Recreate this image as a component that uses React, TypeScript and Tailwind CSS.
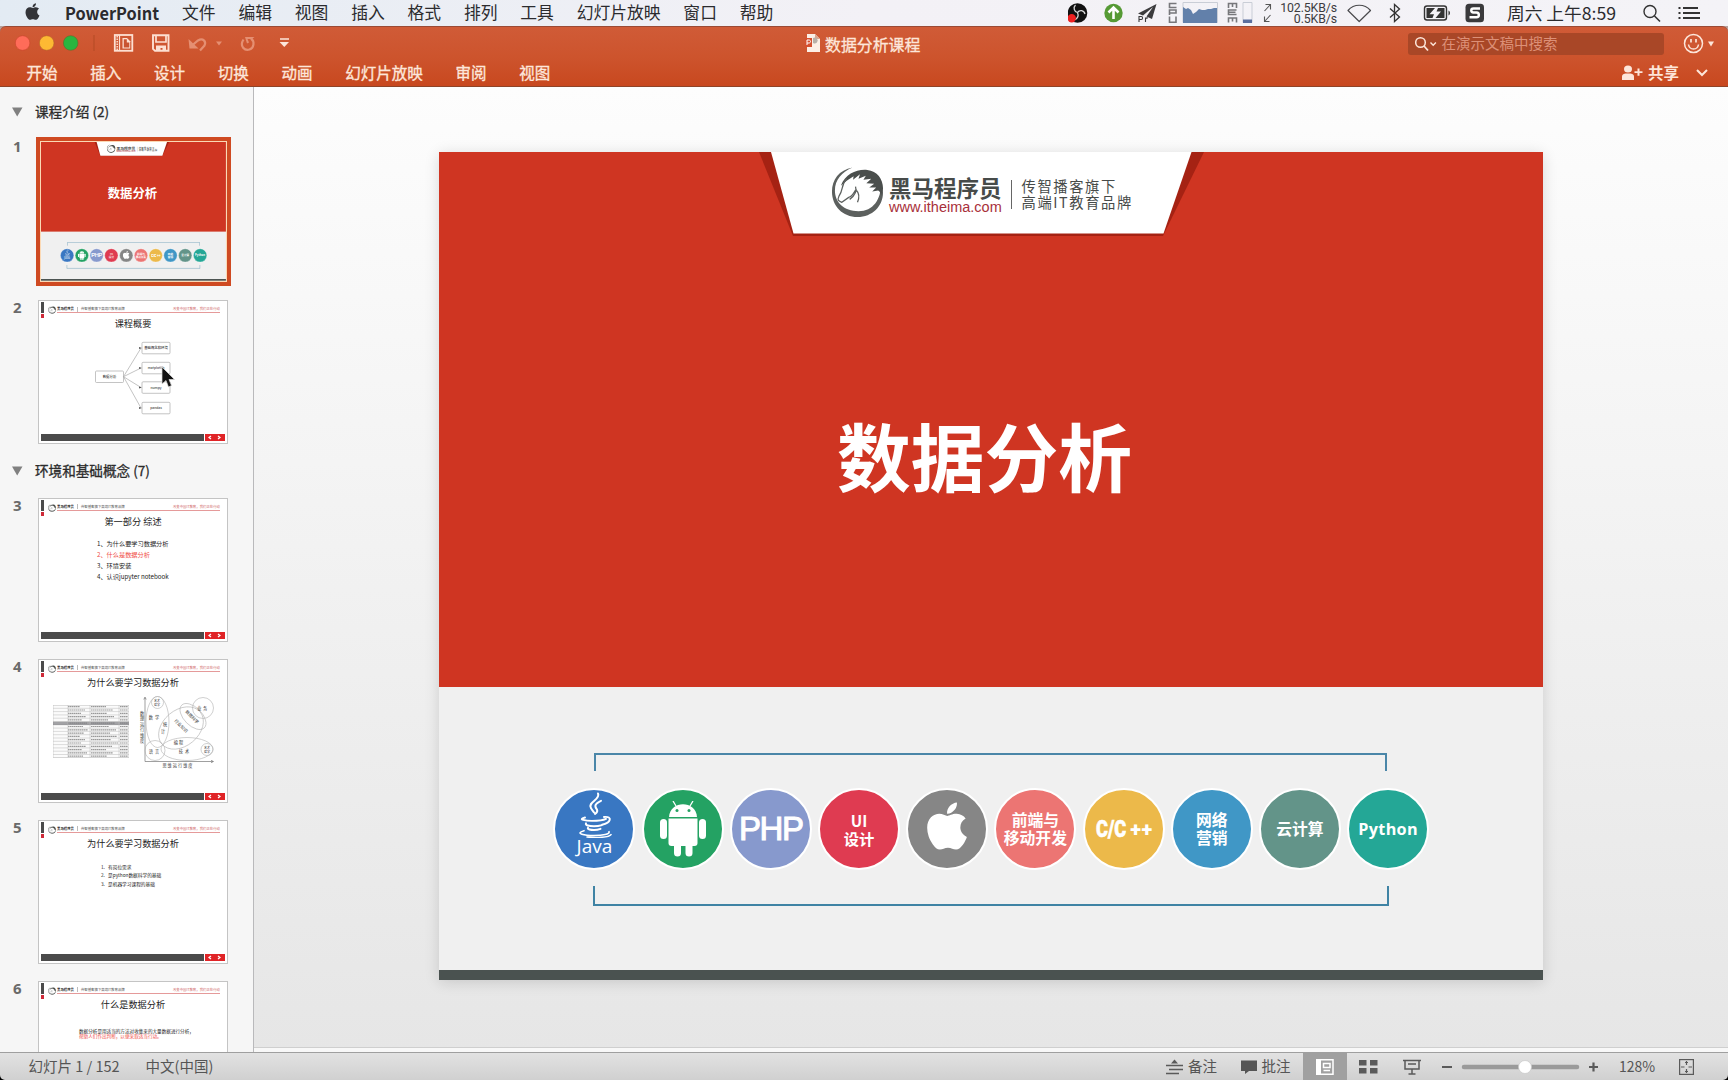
import React from "react";
import { FaApple } from "react-icons/fa";

const menus = ["文件", "编辑", "视图", "插入", "格式", "排列", "工具", "幻灯片放映", "窗口", "帮助"];
const tabs = ["开始", "插入", "设计", "切换", "动画", "幻灯片放映", "审阅", "视图"];

function MenuBar() {
  return (
    <div className="flex h-[26px] shrink-0 items-center bg-gradient-to-r from-[#e3ebf3] via-[#f3f1f6] to-[#f4f3f7] text-[17px] leading-none text-[#2b2b2e]">
      <div className="ml-6 flex w-[41px]">
        <FaApple className="-mt-[3px] h-[19px] w-[17px] text-[#333438]" />
      </div>
      <div className="-mt-[2px] w-[117px] text-[17px] font-bold">
        <span className="inline-block origin-left scale-x-[0.96]">PowerPoint</span>
      </div>
      <div className="-mt-px flex gap-[22.8px]">
        {menus.map((m) => (
          <span key={m} className="text-[16.8px] whitespace-nowrap">{m}</span>
        ))}
      </div>
      <div className="relative ml-auto h-[26px] w-[660px] shrink-0">
        <svg className="absolute inset-0" width="660" height="26" viewBox="1068 0 660 26" fill="none">
          <circle cx="1077.5" cy="13" r="9.8" fill="#111" />
          <g stroke="#d8d8d8" strokeWidth="1.3">
            <path d="M1077.5 12.5c-3.500-1-4.500-5-2-7.500M1077.500 12.500c2-3 6.500-2.500 7.500 1.500M1077.500 12.500c1.500 3.500 0 6-3 7.500" />
          </g>
          <circle cx="1071.700" cy="18.300" r="4.200" fill="#ee2020" />
          <circle cx="1113.500" cy="13" r="9.200" fill="#569a35" />
          <path d="M1113.500 19V8M1108.500 12.500l5-5 5 5" stroke="#fff" strokeWidth="2.600" />
          <path d="M1156.500 4l-18.500 9.500 5 2L1153 7l-6.500 9.500 5.500 2.500z" fill="#3b3b3d" />
          <path d="M1139 22v-5.500h2.300c1.700 0 1.700 3 0 3H1139M1145.500 22v-4.500M1145.500 19c.5-1 1.500-1.200 2.500-1" stroke="#3b3b3d" strokeWidth="1.100" />
          <g stroke="#77777b" strokeWidth="1.600">
            <path d="M1176.500 3.500h-7v4h7M1169.500 15v-5h6.500v3h-6.500M1169.500 16.500v5.700h6.500v-5.700" />
            <path d="M1228.500 8V3.500h8V8M1232.500 3.500V7M1236.500 10h-8v4.500h8M1228.500 12.200h7M1228.500 22.500V18h8v4.500M1232.500 18v3.500" />
          </g>
          <path d="M1183 2.500h34.500v20H1183z" stroke="#c9cdd6" />
          <path d="M1183 23V7l3 2 2-1 3 2 2 4 3-2 3-3 3 1h3l3-1h3l3-1h3V23z" fill="#6280aa" />
          <path d="M1243 2.500h9v20h-9z" stroke="#c9cdd6" />
          <path d="M1243 19.500h9V23h-9z" fill="#5b6f9e" />
          <path d="M1264.500 11l6-6.500M1265.500 4.500h5v5M1270.500 15l-6 6.500M1264.500 16.500v5h5" stroke="#555" strokeWidth="1.100" />
          <path d="M1348 10.500c6-7 16.500-7 22.500 0l-11.300 11z" stroke="#4a4a4d" strokeWidth="1.200" strokeLinejoin="round" />
          <path d="M1390 8.500l9.500 8.500-5 4.500v-17l5 4.500-9.500 8.500" stroke="#333" strokeWidth="1.300" />
          <rect x="1424.500" y="6" width="22" height="14" rx="2.500" stroke="#333" strokeWidth="1.400" />
          <path d="M1448.500 10.500c2 1 2 4 0 5z" fill="#333" />
          <path d="M1426.500 8h8.500l-5.500 6.300h4.500l-1.500 3.700h-6zM1438 8h6.500v10h-9l5.500-6.500h-4.500z" fill="#333" />
          <rect x="1465.500" y="3.800" width="18.500" height="18.500" rx="3.500" fill="#3a3a3c" />
          <path d="M1480 8.500h-6.500c-3 0-3 3.800 0 4h3c3.200.3 3.200 4.700 0 4.700h-7" stroke="#fff" strokeWidth="2.400" />
          <circle cx="1650" cy="11.500" r="6" stroke="#333" strokeWidth="1.400" />
          <path d="M1654.500 16l5.500 5.500" stroke="#333" strokeWidth="1.600" />
          <path d="M1683 8h15M1683 13h17M1683 18h17" stroke="#333" strokeWidth="2.200" />
          <path d="M1678.500 8h2M1678.500 13h2M1678.500 18h2" stroke="#333" strokeWidth="2.200" />
        </svg>
        <div className="absolute top-[2.500px] right-[391px] text-right font-['Roboto'] text-[12.300px] leading-[11.500px] tracking-[-0.100px] text-[#3c3c3f]">
          <div>102.5KB/s</div>
          <div>0.5KB/s</div>
        </div>
        <div className="absolute top-[4px] left-[438.500px] text-[17px] leading-[18px] whitespace-nowrap">
          <span className="inline-block origin-left scale-x-[1.040]">周六 上午8:59</span>
        </div>
      </div>
    </div>
  );
}

function Ribbon() {
  return (
    <div className="flex h-[61px] shrink-0 flex-col rounded-t-[6px] border-t border-b border-t-[#9a4a35] border-b-[#8f4428] bg-gradient-to-b from-[#d05b37] via-[#cd542d] to-[#c8481f] text-[#fde6da]">
      <div className="grid h-[33px] grid-cols-[800px_1fr_325px] items-center">
        <svg width="800" height="33" viewBox="0 27 800 33" fill="none">
          <circle cx="22.600" cy="43" r="7.300" fill="#ff6c59" stroke="#c9432c" strokeWidth=".6" />
          <circle cx="46.700" cy="43" r="7.300" fill="#fdb933" stroke="#b5622b" strokeWidth=".6" />
          <circle cx="70.700" cy="43" r="7.300" fill="#2ab53f" stroke="#5d6d2b" strokeWidth=".6" />
          <path d="M94 35v16" stroke="#b34a24" />
          <rect x="114.800" y="35" width="17.500" height="15.800" stroke="#fde0d2" strokeWidth="1.800" />
          <path d="M117.200 36v14" stroke="#fde0d2" strokeWidth="1.500" strokeDasharray="1.500 1" />
          <path d="M119.500 35v16" stroke="#fde0d2" strokeWidth="1.200" />
          <path d="M122.500 38h4.500l3.200 3.200v7.300h-7.700z" fill="#fde0d2" />
          <path d="M123.800 39.200h3v3.200h2.500v5h-5.500z" fill="#c95431" />
          <path d="M153 35.300h15.500v15.500H155l-2-2z" stroke="#fde0d2" strokeWidth="1.900" />
          <path d="M156 35v7h10v-7" stroke="#fde0d2" strokeWidth="1.700" />
          <path d="M156 51v-5.500h10V51h-3.500v-3h-2v3z" fill="#fde0d2" />
          <g stroke="#e58f72" strokeWidth="2.200">
            <path d="M192 45.500l6-5c5-3 8.500 1 6.500 5l-4.500 5" />
            <path d="M243.500 39.500c-4.500 7 1.500 11.500 6 10s5.500-8 1.500-11" />
          </g>
          <path d="M188.500 39l1 9.500h9z" fill="#e58f72" />
          <path d="M245 37h9.500l-2.500 2h-4.500l1.500 3.500-2 1z" fill="#e58f72" />
          <path d="M216 41.500h6l-3 4z" fill="#e58f72" />
          <path d="M280 39h9" stroke="#fde6da" strokeWidth="1.500" />
          <path d="M279.500 42h9.500l-4.700 5z" fill="#fde6da" />
        </svg>
        <div className="flex items-center pt-[2px] pl-[4.500px]">
          <svg className="-mt-[3px]" width="15" height="18" viewBox="0 0 15 18">
            <path d="M2 0h8l5 5v13H2z" fill="#fcefe6" />
            <path d="M10 0v5h5z" fill="#d9a58f" />
            <path d="M0 4h7v9H0z" fill="#d5502f" />
            <path d="M2 11V6h2c2 0 2 3 0 3H2" stroke="#fff" fill="none" />
            <path d="M8 4a3 3 0 1 1 0 5z" fill="#b8b0a8" />
          </svg>
          <span className="ml-[5.500px] text-[15.900px] leading-none [-webkit-text-stroke:0.300px_#fde6da]">数据分析课程</span>
        </div>
        <div className="flex items-center pl-[4.500px]">
          <div className="flex h-[22px] w-[256px] items-center rounded-[3px] bg-[#a94727] pl-[7px]">
            <svg width="24" height="18" viewBox="0 0 24 18" fill="none" stroke="#fde6da">
              <circle cx="5.500" cy="7.500" r="4.800" strokeWidth="1.500" />
              <path d="M9 11l4 4.500" strokeWidth="1.800" />
              <path d="M15.500 7.500l2.700 2.700 2.700-2.700" strokeWidth="1.400" />
            </svg>
            <span className="ml-[3px] text-[14.500px] leading-none text-[#dd9077]">在演示文稿中搜索</span>
          </div>
          <svg className="ml-[19px]" width="32" height="22" viewBox="0 0 32 22" fill="none" stroke="#fde6da">
            <circle cx="10.500" cy="10.500" r="9" strokeWidth="1.500" />
            <path d="M5.500 11.500c1 6 9 6 10 0" strokeWidth="1.500" />
            <path d="M8 6v3.500M13 6v3.500" strokeWidth="1.700" />
            <path d="M25 8.500h6l-3 5z" fill="#fde6da" stroke="none" />
          </svg>
        </div>
      </div>
      <div className="flex h-[25px] items-center pl-[26.500px]">
        <div className="flex gap-[32.720px] [-webkit-text-stroke:0.350px_#fde6da]">
          {tabs.map((t) => (
            <span key={t} className="text-[15.500px] leading-none whitespace-nowrap">{t}</span>
          ))}
        </div>
        <svg className="ml-auto" width="21" height="16" viewBox="0 0 21 18" preserveAspectRatio="none" fill="#fde6da">
          <circle cx="6" cy="4.500" r="4" />
          <path d="M0 17v-4c0-3 2.500-3.500 6-3.500s6 .5 6 3.500v4z" />
          <path d="M12.500 8h8M16.500 4v8" stroke="#fde6da" strokeWidth="2" />
        </svg>
        <span className="ml-[5px] text-[15.500px] leading-none font-bold">共享</span>
        <svg className="mr-[20px] ml-[17px]" width="12" height="10" viewBox="0 0 12 10" fill="none" stroke="#fde6da" strokeWidth="2">
          <path d="M1 2l5 5 5-5" />
        </svg>
      </div>
    </div>
  );
}

function HorseLogo({ className }: { className?: string }) {
  return (
    <svg className={className} viewBox="0 0 54 54">
      <path d="M22 1.500C8 4 1 14 1 26c0 15 11 26 26 26s26-11 26-25c0-4-1-7-2-9 0 16-8 28-23 28C13 46 4 37 4 25 4 14 11 6 22 1.500z" fill="#5c605e" />
      <path d="M10 20C15 8 26 3 37 4c10 1 16 9 16 19l-2 7c-1-3-1-4-3-5l-6 1 4-4-7 0 5-4-8-.5 5-4.500-8 1 2.500-4-7.500 3 1.500-4.500-7 5.500.5-3.500L16 15z" fill="#4a4e4c" />
      <path d="M16 13c-6 6-3 11-8 18-2 4 0 5 3 6l7-5c4-1 5-5 8-9M25 21c2 6-2 10-6 13M26 25c3 3 3 7 1 12" stroke="#5c605e" strokeWidth="1.300" fill="none" />
    </svg>
  );
}

function JavaMark() {
  return (
    <div className="mb-[10px] flex flex-col items-center">
      <svg width="36" height="46" viewBox="0 0 36 47" preserveAspectRatio="none" fill="none" stroke="#fff" strokeWidth="2" strokeLinecap="round">
        <path d="M22 1.500c3 6-11 9-7 15 1 2 2 3 3 4.500M25 9c-6 3-7 5-4 9 1 2 0 3-2 4.500" />
        <path d="M9 26c-8 2 1 3.500 7 3.500s12-1 14-2M28 25.500c9-1 7 6-2 8M10 32c-1 2 3 3 8 3 4 0 6-.6 8-1.200M12 36.500c-1 1.700 3 2.300 6 2.300s5-.6 6.500-1.200" />
        <path d="M8 39.500c-10 3 1 5 10 5s16-1.500 15-4M11 46c9 1 22 .5 24-2.500" strokeWidth="1.600" />
      </svg>
      <span className="-mt-[1px] font-['Open_Sans'] text-[19px] leading-[19px] font-medium">Java</span>
    </div>
  );
}

function AndroidMark() {
  return (
    <svg width="48" height="56" viewBox="0 0 48 56" fill="#fff">
      <path d="M10 16C11 -1 37 -1 38 16z" />
      <path d="M17 5l-3-5M31 5l3-5" stroke="#fff" strokeWidth="1.300" />
      <circle cx="18" cy="9.500" r="1.500" fill="#24a263" />
      <circle cx="30" cy="9.500" r="1.500" fill="#24a263" />
      <path d="M9.500 17.500h29V42a3 3 0 0 1-3 3h-23a3 3 0 0 1-3-3z" />
      <rect x="1" y="18" width="7" height="20" rx="3.500" />
      <rect x="40" y="18" width="7" height="20" rx="3.500" />
      <rect x="15" y="40" width="7" height="15.500" rx="3.500" />
      <rect x="26.500" y="40" width="7" height="15.500" rx="3.500" />
    </svg>
  );
}

const topics: { color: string; body: React.ReactNode }[] = [
  { color: "bg-[#3977c2]", body: <JavaMark /> },
  { color: "bg-[#24a263]", body: <AndroidMark /> },
  { color: "bg-[#8799cd]", body: <span className="font-['Liberation_Sans'] text-[33px] tracking-[-1.500px] [-webkit-text-stroke:1px_white]">PHP</span> },
  { color: "bg-[#df3b51]", body: <span className="text-center text-[15.300px] leading-[18px] font-bold">UI<br />设计</span> },
  { color: "bg-[#868686]", body: <FaApple className="mb-[6px] h-[54px] w-[42px]" /> },
  { color: "bg-[#ec7573]", body: <span className="text-center text-[15.800px] leading-[18px] font-bold whitespace-nowrap">前端与<br />移动开发</span> },
  {
    color: "bg-[#ecb94a]",
    body: (
      <span className="flex items-center font-['Roboto'] font-black whitespace-nowrap">
        <span className="-mr-[7px] ml-[2px] inline-block w-[41px] origin-left scale-x-[0.76] text-[24px] [-webkit-text-stroke:0.600px_white]">C/C</span>
        <span className="text-[20px] tracking-[0.500px]">++</span>
      </span>
    ),
  },
  { color: "bg-[#4097c6]", body: <span className="text-center text-[15.800px] leading-[18px] font-bold">网络<br />营销</span> },
  { color: "bg-[#639489]", body: <span className="text-[15.800px] font-bold whitespace-nowrap">云计算</span> },
  { color: "bg-[#24a796]", body: <span className="font-['Open_Sans'] text-[16.200px] font-bold tracking-[0.300px]">Python</span> },
];

function CoverSlide() {
  return (
    <div className="flex h-[828px] w-[1104px] flex-col bg-[#f0f0f0] text-white">
      <div className="relative flex h-[535px] items-center justify-center bg-[#cf3522]">
        <svg className="absolute top-0 left-0" width="1104" height="90" viewBox="0 0 1104 90">
          <path d="M320 0h445l-41 84H354z" fill="#a52213" />
          <path d="M332 0h420.500l-28 81.500H354.500z" fill="#fff" />
        </svg>
        <div className="absolute top-[13.500px] left-[392px] flex items-center text-[#474b49]">
          <HorseLogo className="h-[53px] w-[53px]" />
          <div className="mt-[8px] ml-[5.500px] w-[112.500px]">
            <div className="text-[22.500px] leading-[21px] font-bold whitespace-nowrap">黑马程序员</div>
            <div className="font-['Liberation_Sans'] text-[15.500px] leading-[18px] whitespace-nowrap text-[#a8303a]">
              <span className="inline-block w-[112px] origin-left scale-x-[0.935]">www.itheima.com</span>
            </div>
          </div>
          <div className="mx-[9.500px] mt-[5px] h-[29px] w-px bg-[#666]" />
          <div className="mt-[4px] text-[14.300px] leading-[16px] tracking-[1.600px] whitespace-nowrap">
            <div>传智播客旗下</div>
            <div>高端IT教育品牌</div>
          </div>
        </div>
        <h1 className="mt-[68px] mr-[12px] text-[73.800px] leading-none font-bold">数据分析</h1>
      </div>
      <div className="flex flex-1 flex-col items-center pt-[66px]">
        <div className="h-[18px] w-[793px] border-2 border-b-0 border-[#4a86a8]" />
        <div className="mt-[17px] ml-[1.500px] flex gap-[6.200px]">
          {topics.map((t, i) => (
            <div key={i} className={`flex h-[82px] w-[82px] items-center justify-center rounded-full border-2 border-white ${t.color}`}>
              {t.body}
            </div>
          ))}
        </div>
        <div className="mt-[16px] h-[20px] w-[796px] border-2 border-t-0 border-[#3f83a4]" />
      </div>
      <div className="h-[10px] bg-[#4a5250]" />
    </div>
  );
}

function ContentSlide({ title, children }: { title: string; children?: React.ReactNode }) {
  return (
    <div className="flex h-[144px] w-[190px] flex-col border border-[#c4c4c4] bg-white px-[2px] pt-[1px] pb-[2px] text-[#222]">
      <div className="flex h-[17px]">
        <div className="flex w-[3px] flex-col gap-px">
          <div className="h-[11px] bg-[#4b4b4b]" />
          <div className="h-[4px] bg-[#cf2a38]" />
        </div>
        <HorseLogo className="mt-[4px] ml-[4px] h-[8px] w-[8px]" />
        <div className="mt-[4px] ml-px flex h-[7px] flex-1 items-center border-b border-[#e59a9a] text-[3.400px] leading-none whitespace-nowrap">
          <b>黑马程序员</b>
          <span className="mx-[3px] h-[5px] w-px bg-[#bbb]" />
          <span className="text-[#555]">传智播客旗下高端IT教育品牌</span>
          <span className="ml-auto text-[#d06a6a]">改变中国IT教育，我们正在行动</span>
        </div>
        <div className="w-[5px]" />
      </div>
      <div className="-mt-[2px] mb-[2px] text-center text-[9.200px] leading-[12px] whitespace-nowrap">{title}</div>
      <div className="relative flex-1">{children}</div>
      <div className="flex h-[7px] justify-end bg-[#4b4b4b]">
        <svg width="21" height="7" viewBox="0 0 21 7" fill="none">
          <path d="M0 0h21v7H0z" fill="#e02427" />
          <path d="M.5 0v7" stroke="#fff" />
          <path d="M7 2L5 3.500 7 5M14 2l2 1.500-2 1.500" stroke="#fff" strokeWidth="1.200" />
        </svg>
      </div>
    </div>
  );
}

function MindMap() {
  const nodes: [number, string][] = [[17, "基础概念和环境"], [37, "matplotlib"], [56.5, "numpy"], [77, "pandas"]];
  return (
    <svg className="absolute top-0 left-0" width="184" height="100" viewBox="0 0 184 100">
      <g fill="#fff" stroke="#aaa" strokeWidth=".7">
        <rect x="54.500" y="40" width="28" height="11.500" rx="1" />
        {nodes.map(([y]) => (
          <g key={y}>
            <path d={`M82.5 45.7L100 ${y}`} />
            <path d={`M98 ${y - 1}l3 1-3 1z`} fill="#555" stroke="none" />
            <rect x="101" y={y - 5.7} width="28" height="11.500" rx="1" />
          </g>
        ))}
      </g>
      <g fontSize="3.400" textAnchor="middle" fill="#111">
        <text x="68.500" y="47">数据分析</text>
        {nodes.map(([y, t]) => (
          <text key={t} x="115" y={y + 1.2}>{t}</text>
        ))}
      </g>
    </svg>
  );
}

function WhyFigure() {
  const rows = Array.from({ length: 16 });
  return (
    <div className="flex pt-[15px] pl-[12px]">
      <svg width="76" height="53" viewBox="0 0 76 53">
        <path d="M0 0h76v52.500H0z" fill="#fbfbfb" stroke="#bbb" strokeWidth=".6" />
        {rows.map((_, i) => (
          <g key={i}>
            <path d={`M0 ${i * 3.3}h76`} stroke="#bbb" strokeWidth=".5" />
            <path d={`M15 ${i * 3.3 + 1.7}h${12 + ((i * 5) % 9)}M38 ${i * 3.3 + 1.7}h${15 + ((i * 7) % 13)}M67 ${i * 3.3 + 1.7}h8`} stroke="#999" strokeWidth="1.200" strokeDasharray="1.600 .4" />
          </g>
        ))}
        <path d="M0 16.700h76v3.300H0z" fill="#7c7c80" opacity=".7" />
        <path d="M15 0v52.500M37 0v52.500M66 0v52.500" stroke="#bbb" strokeWidth=".5" />
      </svg>
      <svg className="-mt-[9px] ml-[10px] overflow-visible" width="76" height="74" viewBox="139 697 76 74" fill="none">
        <path d="M145 699v63.500h68M143.800 700.500l1.200-2.500 1.200 2.500M211 761.300l2.500 1.200-2.500 1.200" stroke="#777" strokeWidth=".7" />
        <g stroke="#b0b0b0" strokeWidth=".6">
          <ellipse cx="157.500" cy="723" rx="11.500" ry="25.500" />
          <circle cx="157.500" cy="703.500" r="6" />
          <circle cx="155" cy="751.500" r="10" />
          <ellipse cx="187" cy="750" rx="26" ry="11.500" />
          <circle cx="207" cy="750.500" r="6" />
          <ellipse cx="181" cy="729" rx="25" ry="18" transform="rotate(-40 181 729)" />
          <ellipse cx="193" cy="717.500" rx="16" ry="9" transform="rotate(45 193 717.500)" />
          <circle cx="203" cy="709" r="10.500" />
        </g>
        <g fill="#333" fontSize="4.200" textAnchor="middle">
          <text x="157" y="703" fontSize="3">艺术</text>
          <text x="157" y="706.500" fontSize="3">哲学</text>
          <text x="155" y="720" letterSpacing="2">数学</text>
          <text x="165" y="727">统</text>
          <text x="163" y="734">计</text>
          <text x="203" y="711" letterSpacing="1.500">业务</text>
          <text x="191" y="719" transform="rotate(45 191 719)">数据科学</text>
          <text x="180" y="728" transform="rotate(45 180 728)">行业知识</text>
          <text x="179" y="745" letterSpacing="1">编程</text>
          <text x="155" y="753.500" letterSpacing="2">语言</text>
          <text x="185" y="753.500" letterSpacing="2">技术</text>
          <text x="207" y="750" fontSize="3">艺术</text>
          <text x="207" y="753.500" fontSize="3">哲学</text>
          <text x="178" y="767.500" letterSpacing="1">思维运行维度</text>
          {"数理运行维度".split("").map((c, i) => (
            <text key={i} x="142" y={716 + i * 5.4}>{c}</text>
          ))}
        </g>
      </svg>
    </div>
  );
}

function Section({ label }: { label: string }) {
  return (
    <div className="flex h-[20px] items-center pl-[12px] text-[13.600px] text-[#2c2c2c]">
      <svg width="11" height="10" viewBox="0 0 11 10"><path d="M0 .5h10.500L5.200 9.500z" fill="#808080" /></svg>
      <span className="ml-[12px] leading-none [-webkit-text-stroke:0.300px_#2c2c2c]">{label}</span>
    </div>
  );
}

function ThumbRow({ n, children }: { n: number; children: React.ReactNode }) {
  return (
    <div className="flex h-[144px] shrink-0">
      <div className="w-[38px] pl-[13px] font-['Noto_Sans'] text-[15px] leading-[15px] font-bold text-[#6a6a6a]">{n}</div>
      {children}
    </div>
  );
}

function Sidebar() {
  return (
    <div className="relative flex w-[254px] shrink-0 flex-col overflow-hidden border-r border-[#b9b9bb] bg-[#f6f6f6] pt-[18px]">
      <Section label="课程介绍 (2)" />
      <div className="mt-[20.500px] flex flex-col gap-[17px]">
        <ThumbRow n={1}>
          <div className="-mt-[2.500px] -ml-[2px] h-[149px] w-[194.500px] shrink-0 border-[4px] border-[#cf4a22] bg-[#fbd9b5] p-[1px]">
            <div className="h-[139px] w-[184.700px] overflow-hidden">
              <div className="origin-top-left scale-[0.1675]"><CoverSlide /></div>
            </div>
          </div>
        </ThumbRow>
        <ThumbRow n={2}>
          <ContentSlide title="课程概要"><MindMap /></ContentSlide>
        </ThumbRow>
      </div>
      <div className="mt-[16.500px]"><Section label="环境和基础概念 (7)" /></div>
      <div className="mt-[17px] flex flex-col gap-[17px]">
        <ThumbRow n={3}>
          <ContentSlide title="第一部分 综述">
            <div className="pt-[9px] pl-[56px] text-[6.200px] leading-[11.300px] whitespace-nowrap">
              <div>1、为什么要学习数据分析</div>
              <div className="text-[#f04b45]">2、什么是数据分析</div>
              <div>3、环境安装</div>
              <div>4、认识jupyter notebook</div>
            </div>
          </ContentSlide>
        </ThumbRow>
        <ThumbRow n={4}>
          <ContentSlide title="为什么要学习数据分析"><WhyFigure /></ContentSlide>
        </ThumbRow>
        <ThumbRow n={5}>
          <ContentSlide title="为什么要学习数据分析">
            <div className="pt-[12px] pl-[60px] text-[4.700px] leading-[8.700px] whitespace-nowrap">
              <div>1.&nbsp;&nbsp;&nbsp;有岗位需求</div>
              <div>2.&nbsp;&nbsp;&nbsp;是python数据科学的基础</div>
              <div>3.&nbsp;&nbsp;&nbsp;是机器学习课程的基础</div>
            </div>
          </ContentSlide>
        </ThumbRow>
        <ThumbRow n={6}>
          <ContentSlide title="什么是数据分析">
            <div className="pt-[17px] pl-[38px] text-[4.600px] leading-[5.500px] whitespace-nowrap">
              <div>数据分析是用适当的方法对收集来的大量数据进行分析，</div>
              <div className="text-[#f04b45]">帮助人们作出判断，以便采取适当行动。</div>
            </div>
          </ContentSlide>
        </ThumbRow>
      </div>
      <svg className="absolute top-[279px] left-[160px]" width="16" height="22" viewBox="0 0 16 22">
        <path d="M2 1v17l4-3.500 2.500 6.500 3-1.500L9 13.500h5.500z" fill="#111" stroke="#ddd" strokeWidth=".7" />
      </svg>
    </div>
  );
}

function StatusBar() {
  return (
    <div className="flex h-[28px] shrink-0 items-center rounded-b-[5px] border-t border-[#9f9f9f] bg-gradient-to-b from-[#e2e2e2] to-[#d0d0d0] text-[14.500px] leading-none text-[#555]">
      <span className="ml-[28.500px] w-[117px] whitespace-nowrap">幻灯片 1 / 152</span>
      <span>中文(中国)</span>
      <svg className="ml-auto" width="17" height="16" viewBox="0 0 17 16" stroke="#5a5a5a" strokeWidth="1.500">
        <path d="M5 4.500L8.500 0.500 12 4.500z" fill="#5a5a5a" stroke="none" />
        <path d="M0 6.500h17M3 10.500h14M0 14.500h13" />
      </svg>
      <span className="ml-[5px] w-[52.500px]">备注</span>
      <svg width="16" height="15" viewBox="0 0 16 15" fill="#555"><path d="M0 1.500h16v10.500H8L4 15v-3H0z" /></svg>
      <span className="ml-[5px] w-[41.500px]">批注</span>
      <div className="flex h-full w-[44px] items-center justify-center bg-[#a0a0a0]">
        <svg width="18" height="16" viewBox="0 0 18 16" fill="none" stroke="#fff" strokeWidth="1.500">
          <path d="M0 0h5v16H0z" fill="#fff" stroke="none" />
          <path d="M4 .8h13v14.400H4M7.500 4.500h6.500v4H7.500zM7.500 11.500h6.500" />
        </svg>
      </div>
      <svg className="ml-[12px]" width="19" height="14" viewBox="0 0 19 14" fill="#5a5a5a"><path d="M0 0h7.500v5.500H0zM11 0h7.500v5.500H11zM0 8h7.500v5.500H0zM11 8h7.500v5.500H11z" /></svg>
      <svg className="ml-[24.500px]" width="18" height="16" viewBox="0 0 18 16" fill="none" stroke="#5a5a5a" strokeWidth="1.500">
        <path d="M0 1.500h18M2 1.500v8.500h14V1.500M5 5h8M9 10v4.500M5.500 15h7" />
      </svg>
      <svg className="ml-[21.500px]" width="156" height="16" viewBox="0 0 156 16">
        <path d="M0 8h10M147 8h9M151.500 3.500v9" stroke="#5a5a5a" strokeWidth="2.200" />
        <path d="M22 8h113" stroke="#9a9a9a" strokeWidth="4.500" strokeLinecap="round" />
        <circle cx="83" cy="8" r="6.500" fill="#fff" stroke="#c8c8c8" strokeWidth=".7" />
      </svg>
      <span className="ml-[21px] w-[60px] text-[14.700px]"><span className="inline-block origin-left scale-x-[0.95]">128%</span></span>
      <svg className="mr-[34px]" width="15" height="16" viewBox="0 0 15 16" fill="none" stroke="#5a5a5a" strokeWidth="1.200">
        <rect x=".6" y=".6" width="13.800" height="14.800" />
        <path d="M7.500 2v4M7.500 10v4M2 8h3.500M9.500 8H13M6 3.500h3M6 12.500h3" />
      </svg>
    </div>
  );
}

export default function App() {
  return (
    <div className="flex h-[1080px] w-[1728px] flex-col overflow-hidden bg-black font-['Noto_Sans_CJK_SC',sans-serif]">
      <MenuBar />
      <div className="shrink-0 bg-[#b9a09a]"><Ribbon /></div>
      <div className="flex min-h-0 flex-1">
        <Sidebar />
        <div className="flex flex-1 flex-col bg-gradient-to-b from-[#fdfdfd] to-[#e6e6e6]">
          <div className="flex-1 pt-[65px] pl-[184.500px]">
            <div className="h-[828px] w-[1104px] shadow-[0_2px_14px_rgba(0,0,0,0.14)]"><CoverSlide /></div>
          </div>
          <div className="h-[5px] border-t border-[#cfcfcf] bg-[#f8f8f8]" />
        </div>
      </div>
      <StatusBar />
    </div>
  );
}
